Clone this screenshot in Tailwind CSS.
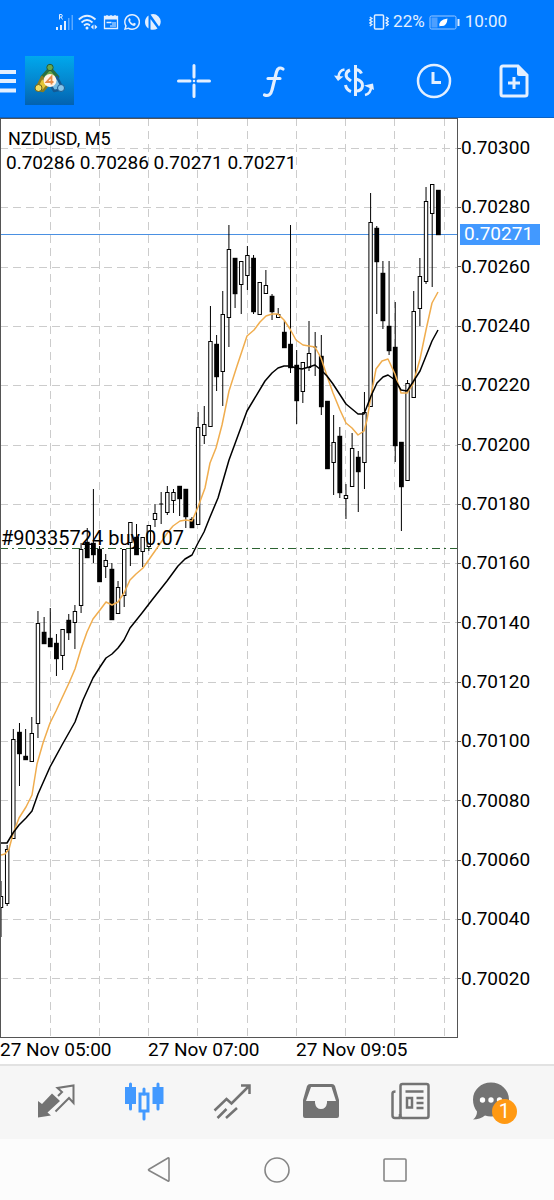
<!DOCTYPE html>
<html lang="en">
<head>
<meta charset="utf-8">
<meta name="viewport" content="width=device-width, initial-scale=1">
<title>NZDUSD, M5</title>
<script src="https://cdn.jsdelivr.net/npm/@tailwindcss/browser@4"></script>
</head>
<body class="min-h-screen flex flex-col bg-white text-black font-[Roboto,sans-serif]">
<header class="bg-[#007aff] text-[#e3efff] border-b border-[#0a62c4]">
  <div class="h-11 flex items-center justify-between pl-14 pr-[47px]">
    <div class="flex items-center gap-[5px]">
      <svg class="w-[17px] h-4" viewBox="0 0 17 16" fill="currentColor"><path d="M0 13h2v3H0zM4 11h2v5H4zM8 7h2v9H8z"/><path opacity=".4" d="M12 4h1.500v12H12zM15.500 1H17v15h-1.500z"/><path d="M3.500 5.500v-5h1.500a1.300 1.300 0 010 2.600h-1.500M5 3l1.500 2.500" fill="none" stroke="currentColor"/></svg>
      <svg class="w-5 h-4" viewBox="0 0 20 16" fill="none" stroke="currentColor" stroke-width="1.800"><path d="M.8 5.500Q9 -2 17.500 5.500M3.500 8.500q5.500-5 11 0M6 11.500q3-3 6 0"/><circle cx="9" cy="14" r="1.500" fill="currentColor" stroke="none"/><path d="M15.500 10.500v5l-2.700-2.500zM16.700 10.500v5l2.700-2.500z" fill="currentColor" stroke="none"/></svg>
      <svg class="w-4 h-4" viewBox="0 0 16 16" fill="none" stroke="currentColor" stroke-width="1.300"><path d="M1.500 2.500h13v12h-13zM3.500 8.500h5"/><path d="M1 3h14v2.500H1z" fill="currentColor" stroke="none"/><path d="M9 8h4v5H7v-2h2z" fill="currentColor" opacity=".5" stroke="none"/><path d="M4 1v2M8 1v2M12 1v2"/></svg>
      <svg class="w-4 h-4" viewBox="0 0 24 24" fill="currentColor"><path d="M12 0a12 12 0 00-10.300 18L0 24l6.200-1.600A12 12 0 1012 0zm0 21.800a10 10 0 01-5-1.400l-3.800 1 1-3.600A9.800 9.800 0 1112 21.800z"/><path d="M17.500 14.300l-2.500-1.200-1.300 1.500c-2.200-1-3.700-2.500-4.600-4.200l1-1.400-1.200-2.600H7.500C4.500 9.500 9 16 14 17.700c2 .6 3.800-.8 3.500-3.400z"/></svg>
      <svg class="w-4 h-4" viewBox="0 0 16 16" fill="currentColor"><path d="M3.500 1.500v13Q0 12 0 8t3.500-6.500zM5.500 5l7 9.500Q9.500 16.500 5.500 15.500zM5.500.5Q10-1 13.500 2.500T15 11l-1 1.500z"/></svg>
    </div>
    <div class="flex items-center gap-1 text-[17px]">
      <svg class="w-5 h-4" viewBox="0 0 20 16" fill="none" stroke="currentColor" stroke-width="1.500"><rect x="5.500" y="1" width="9" height="14" rx="1"/><path d="M.8 3l2 1.500-2 1.500 2 1.500-2 1.500 2 1.500-2 1.500M17.200 3l2 1.500-2 1.500 2 1.500-2 1.500 2 1.500-2 1.500"/></svg>
      <span>22%</span>
      <svg class="w-[31px] h-4" viewBox="0 0 31 16" fill="none" stroke="#9cc8ff"><rect x="1" y="2" width="26" height="13" rx="1.500"/><path d="M2.500 3.500h6v10h-6z" fill="#4d9fff" stroke="none"/><path d="M29.500 5v7" stroke="#e3efff" stroke-width="2"/><path d="M10.500 12.500Q9 6 18.500 4.500Q18 13 11.500 12z" fill="#fff" stroke="none"/></svg>
      <time class="ml-px">10:00</time>
    </div>
  </div>
  <div class="h-[73px] flex items-center justify-between pr-5">
    <div class="flex items-center gap-[9px]">
      <button aria-label="Menu" class="w-4 h-6"><svg class="w-4 h-6" viewBox="0 0 16 24" stroke="currentColor" stroke-width="4"><path d="M0 3h16M0 12h16M0 21.500h16"/></svg></button>
      <svg class="w-[49px] h-[49px]" viewBox="0 0 49 49"><defs><linearGradient id="tile" x2="0" y2="1"><stop stop-color="#00a8ed"/><stop offset=".5" stop-color="#0488d0"/><stop offset="1" stop-color="#0362b0"/></linearGradient></defs><path fill="url(#tile)" d="M0 0h49v49H0z"/><g stroke-linejoin="round"><path d="M25 12l8 9-8 4-8-4z" fill="#67a84c" stroke="#286f43" stroke-width="3"/><path d="M17 21l6 8-5 6-7-2z" fill="#e3c536" stroke="#8a7d20" stroke-width="2.500"/><path d="M32 21l6 12-9 2-4-7z" fill="#74bbe4" stroke="#145a94" stroke-width="2.500"/></g><circle cx="25" cy="11.500" r="3.200" fill="#69a84f" stroke="#275c34"/><circle cx="13.500" cy="32" r="3.500" fill="#f1de64" stroke="#67611f"/><circle cx="36" cy="32" r="3.500" fill="#88c6eb" stroke="#1d5c91"/><circle cx="25" cy="24.500" r="6.500" fill="#fff4e8"/><path d="M26.500 28.500v-8l-5 5.500h7" fill="none" stroke="#e68b49" stroke-width="1.800"/></svg>
    </div>
    <nav aria-label="Chart tools" class="flex items-center gap-10">
      <button aria-label="Crosshair"><svg class="w-10 h-10" viewBox="0 0 40 40" stroke="currentColor" stroke-width="3" stroke-linecap="round"><path d="M4.500 20H16M24 20h11.500M20 4.500V16M20 24v11.500"/><path d="M20 20h.01" stroke-width="2.500"/></svg></button>
      <button aria-label="Indicators"><svg class="w-10 h-10" viewBox="0 0 40 40" fill="none" stroke="currentColor" stroke-width="3.200" stroke-linecap="round"><path d="M29 8c-3-2-5.500-1-6.500 3l-4.500 18c-1 4.500-3.500 6.500-7.500 5M14 17.500h12"/></svg></button>
      <button aria-label="Trade"><svg class="w-10 h-10" viewBox="0 0 40 40" fill="none" stroke="currentColor" stroke-width="3"><path d="M21.500 4v31"/><path d="M22 8.500q4 .5 5.500 4M22 18c5 1.500 7 3.500 6.500 7s-3 5-6.500 5M16 9c-5 2-5 7-1 9.500l2 1.500M11.500 24c.5 3 2.500 5.500 5.500 6.500"/><path d="M10.500 8.500c-4 .5-5.500 3-6 7" stroke-width="2.500"/><path d="M0 14.500l9.500 1L4 20zM30 24.500l9-2 1 6.500z" fill="currentColor" stroke="none"/><path d="M37 26c0 4-2 7-6 8" stroke-width="2.500"/></svg></button>
      <button aria-label="Timeframe"><svg class="w-10 h-10" viewBox="0 0 40 40" fill="none" stroke="currentColor" stroke-width="2.500"><circle cx="20" cy="20" r="16"/><path d="M19 11v10.500h8" stroke-width="3"/></svg></button>
      <button aria-label="New order"><svg class="w-10 h-10" viewBox="0 0 40 40" fill="none" stroke="currentColor" stroke-width="3"><path d="M9 5h15l9 9v19q0 2-2 2H9q-2 0-2-2V7q0-2 2-2z"/><path d="M23 4v9q0 2 2 2h9" fill="currentColor" stroke="none"/><path d="M20 16v12M14 22h12"/></svg></button>
    </nav>
  </div>
</header>
<main class="text-[19px]">
  <div class="flex">
    <section class="relative flex-1 min-w-0" aria-label="Price chart">
      <svg id="plot" class="block w-full h-auto" viewBox="0 118 458 920">
        <g id="grid" fill="none" stroke="#ccc" stroke-dasharray="8 5"></g>
        <path d="M0 234.500h458" stroke="#4a90e2"/>
        <path d="M0 548.500h458" stroke="#2c6331" stroke-dasharray="8 4 2 4"/>
        <g id="candles" stroke="#000"></g>
        <path d="M1 855L5 854 9 849 13 834 19 818 26 807 32 795 37 764 43 743 50 723 56 711 62 698 69 683 75 669 81 649 87 632 93 619 100 610 106 602 112 605 118 602 124 593 130 580 136 574 143 568 155 551 168 532 173 526 180 521 186 520 192 521 198 507 205 488 210 463 216 448 222 425 229 391 237 366 247 336 254 330 260 322 266 316 272 314 278 314 284 320 290 329 296 340 303 345 309 346 315 347 321 358 327 376 333 393 340 410 346 423 352 428 358 435 364 431 367 420 371 396 376 369 382 361 388 359 395 374 401 393 407 393 413 384 420 359 426 330 432 303 438 292" fill="none" stroke="#f0ad4e" stroke-width="1.500" stroke-linejoin="round"/>
        <path d="M1 843L7 843 13 833 19 825 26 818 32 811 38 794 50 767 62 745 75 722 83 700 93 678 100 667 106 658 112 654 118 648 124 640 130 628 142 613 152 600 167 581 178 566 185 559 192 555 198 543 204 532 210 517 218 498 229 460 247 411 265 381 272 373 278 368 284 366 290 366 296 368 302 369 309 367 315 365 321 370 327 376 333 384 346 404 358 414 364 414 371 396 377 383 383 377 388 375 395 380 401 390 407 391 413 382 420 371 426 356 432 341 438 330" fill="none" stroke="#000" stroke-width="1.500" stroke-linejoin="round"/>
        <path d="M.5 118v920M0 118.500h458M0 1037.500h458M457.500 118v920" stroke="#555" fill="none"/>
      </svg>
      <div class="absolute left-2 top-[9px] text-lg leading-6">NZDUSD, M5</div>
      <div class="absolute left-[6px] top-[33px] leading-6">0.70286 0.70286 0.70271 0.70271</div>
      <div class="absolute left-px top-[44%] pt-px text-xl leading-7 whitespace-nowrap">#90335724 buy 0.07</div>
    </section>
    <aside class="relative w-24 flex flex-col justify-between pt-5 pb-[49px] leading-5" aria-label="Price scale">
      <div class="flex items-center before:w-[3px] before:h-px before:bg-[#555]">0.70300</div>
      <div class="flex items-center before:w-[3px] before:h-px before:bg-[#555]">0.70280</div>
      <div class="flex items-center before:w-[3px] before:h-px before:bg-[#555]">0.70260</div>
      <div class="flex items-center before:w-[3px] before:h-px before:bg-[#555]">0.70240</div>
      <div class="flex items-center before:w-[3px] before:h-px before:bg-[#555]">0.70220</div>
      <div class="flex items-center before:w-[3px] before:h-px before:bg-[#555]">0.70200</div>
      <div class="flex items-center before:w-[3px] before:h-px before:bg-[#555]">0.70180</div>
      <div class="flex items-center before:w-[3px] before:h-px before:bg-[#555]">0.70160</div>
      <div class="flex items-center before:w-[3px] before:h-px before:bg-[#555]">0.70140</div>
      <div class="flex items-center before:w-[3px] before:h-px before:bg-[#555]">0.70120</div>
      <div class="flex items-center before:w-[3px] before:h-px before:bg-[#555]">0.70100</div>
      <div class="flex items-center before:w-[3px] before:h-px before:bg-[#555]">0.70080</div>
      <div class="flex items-center before:w-[3px] before:h-px before:bg-[#555]">0.70060</div>
      <div class="flex items-center before:w-[3px] before:h-px before:bg-[#555]">0.70040</div>
      <div class="flex items-center before:w-[3px] before:h-px before:bg-[#555]">0.70020</div>
      <div class="absolute left-[2px] top-[106px] w-20 h-[21px] pl-1 bg-[#4299ff] text-white">0.70271</div>
    </aside>
  </div>
  <div class="h-[26px] flex leading-6 whitespace-nowrap">
    <time class="w-[148px]">27 Nov 05:00</time>
    <time class="w-[148px]">27 Nov 07:00</time>
    <time class="w-[148px]">27 Nov 09:05</time>
  </div>
</main>
<nav aria-label="Sections" class="h-[75px] border-t-2 border-[#e2e2e2] bg-[#f6f6f6] text-[#737373] flex items-center justify-between pl-9 pr-[43px] pb-1">
  <button aria-label="Quotes"><svg class="w-10 h-10" viewBox="0 0 40 40" fill="none" stroke="currentColor" stroke-width="2"><path d="M2 20v16.500l13-2-3.500-3L24 20l-8-7.500L6 23z" fill="currentColor" stroke="none"/><path d="M19.500 30.500L33 17l4.500 5V4.500L21.500 7l4.500 4-4 4"/></svg></button>
  <button aria-label="Charts" class="text-[#4299ff]"><svg class="w-10 h-10" viewBox="0 0 40 40" fill="none" stroke="currentColor" stroke-width="3" stroke-linecap="round"><path d="M6.500 3v25M34 3v25M20 8v5M20 31v7"/><path d="M1 6h11v17H1zM28.500 6h11v17h-11z" fill="currentColor" stroke="none"/><path d="M16 13h8v17h-8z"/></svg></button>
  <button aria-label="Trade"><svg class="w-10 h-10" viewBox="0 0 40 40" fill="none" stroke="currentColor" stroke-width="2.500"><path d="M1.500 29.500L13.500 18l5 4.500L36 5M28 4.500h8.500V13M4.500 37l9-9M13 37l11-10"/></svg></button>
  <button aria-label="History"><svg class="w-10 h-10" viewBox="0 0 40 40" fill="currentColor"><path fill-rule="evenodd" d="M9 3h22q2 0 3 2l4 14v16q0 2-2 2H4q-2 0-2-2V19L6 5q1-2 3-2zm1 3L5 20h9v2q1 6 6 6t6-6v-2h9L30.500 6z"/></svg></button>
  <button aria-label="News"><svg class="w-10 h-10" viewBox="0 0 40 40" fill="none" stroke="currentColor" stroke-width="2.500"><rect x="10.500" y="3" width="28" height="34" rx="2"/><path d="M10.500 37H5q-2.500 0-2.500-2.500v-22q0-2 3-2M10 33v2q0 2-2 2"/><path d="M15.500 10.500h18M26.500 17h7M26.500 22h7M26.500 27h7M17 17h5v9.500h-5z"/></svg></button>
  <button aria-label="Messages" class="relative -ml-[7px]"><svg class="w-10 h-10" viewBox="0 0 40 40"><path d="M20 1.500c10 0 18 7.500 18 17s-8 17-18 17q-3 0-6-1-5 4-12 4 4-3 4-8-4-5-4-12c0-9.500 8-17 18-17z" fill="currentColor"/><g fill="#fff"><circle cx="11.500" cy="19" r="2.700"/><circle cx="20" cy="19" r="2.700"/><circle cx="28.500" cy="19" r="2.700"/></g></svg><span class="absolute left-[21px] top-[18px] w-[25px] h-[25px] rounded-full bg-[#ff9913] text-white text-xl leading-[25px] text-center">1</span></button>
</nav>
<nav aria-label="System" class="flex-1 min-h-[60px] bg-[#fcfcfc] text-[#858585] flex items-center justify-center gap-[90px]">
  <button aria-label="Back"><svg class="w-7 h-7" viewBox="0 0 28 28" fill="none" stroke="currentColor" stroke-width="1.600" stroke-linejoin="round"><path d="M24 2.500v22q0 1-1 .5L4 14.500q-1-.7 0-1.200L23 2q1-.5 1 .5z"/></svg></button>
  <button aria-label="Home"><svg class="w-7 h-7" viewBox="0 0 28 28" fill="none" stroke="currentColor" stroke-width="1.600"><circle cx="14" cy="14" r="12"/></svg></button>
  <button aria-label="Recent apps"><svg class="w-7 h-7" viewBox="0 0 28 28" fill="none" stroke="currentColor" stroke-width="1.600"><rect x="3" y="3" width="22" height="22" rx="1"/></svg></button>
</nav>
<script>
// Each candle: [high, body top, body bottom, low, falling]
const candles = [
[881,896,908,937,0],[845,849,904,906,0],[729,739,839,839,0],[723,732,754,786,1],[729,756,760,760,1],[717,733,762,762,0],
[611,623,724,738,0],[617,632,644,644,1],[608,638,647,647,1],[634,643,659,676,1],[629,629,656,670,0],[614,620,633,640,1],
[605,611,623,649,0],[543,549,606,613,0],[528,542,558,558,1],[489,543,555,563,1],[546,549,582,582,1],[554,560,567,578,0],
[563,569,620,620,1],[581,587,614,614,0],[549,549,596,607,0],[522,522,543,566,0],[524,537,555,555,1],[537,537,552,567,0],
[525,525,547,551,0],[504,513,520,527,0],[492,504,504,524,0],[486,492,513,515,0],[489,492,501,513,0],[486,486,499,516,1],
[489,489,517,528,1],[517,519,528,528,1],[412,427,525,525,0],[406,424,436,444,0],[306,341,427,427,0],[335,344,377,391,1],
[291,314,372,406,0],[225,249,318,347,0],[258,258,294,308,1],[261,261,285,314,0],[246,255,276,290,0],[255,258,312,314,1],
[282,282,315,315,0],[270,285,294,294,0],[294,296,312,320,1],[308,314,318,318,0],[321,332,348,348,1],[225,344,368,373,1],
[350,365,401,424,1],[362,362,392,403,0],[321,353,368,371,0],[332,347,347,376,0],[335,356,407,415,1],[401,401,469,469,1],
[415,442,463,495,0],[427,436,493,498,1],[484,495,499,519,0],[433,448,487,487,0],[451,457,472,512,1],[392,412,463,489,0],
[193,222,407,407,0],[226,228,262,314,1],[261,273,321,329,1],[261,326,351,355,1],[302,347,446,462,1],[442,442,487,531,1],
[380,383,481,481,0],[291,311,398,398,0],[258,276,309,326,0],[187,201,282,284,0],[184,184,214,287,0],[190,190,235,235,1]];
document.getElementById('candles').innerHTML = candles.map(([h, t, b, l, down], i) => {
  const x = 1 + i * 6.16;
  const body = b > t
    ? `<rect x="${x - 1.7}" y="${t + .5}" width="3.4" height="${b - t - 1}" fill="${down ? '#000' : '#fff'}" stroke-width="${down ? 1.4 : 1}"/>`
    : `<path d="M${x - 2} ${t}h4"/>`;
  return `<path d="M${x} ${h}V${l}"/>` + body;
}).join('');
let lines = '';
for (let i = 0; i < 9; i++) lines += `M${Math.round(49.5 + i * 49.25) + .5} 118V1037`;
for (let i = 0; i < 15; i++) lines += `M0 ${Math.round(148 + i * 59.3) + .5}H458`;
document.getElementById('grid').innerHTML = `<path d="${lines}"/>`;
</script>
</body>
</html>
